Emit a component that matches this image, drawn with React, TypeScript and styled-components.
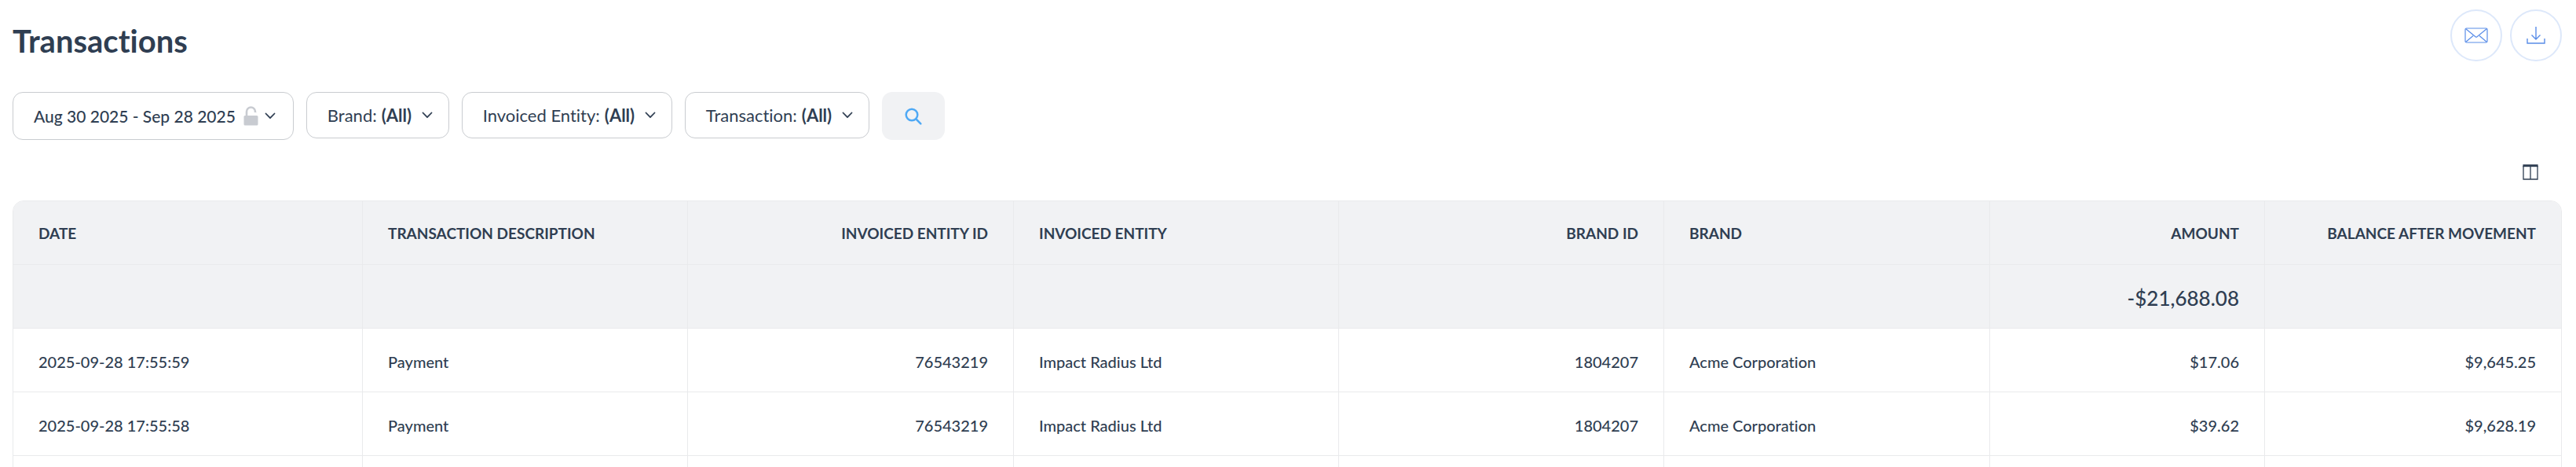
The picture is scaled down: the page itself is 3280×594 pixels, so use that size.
import React from "react";
import styled, { createGlobalStyle } from "styled-components";

const ink = "#2f3e52";
const line = "#e9eaec";
const panel = "#f1f2f4";

const GlobalStyle = createGlobalStyle`
  *, *::before, *::after { box-sizing: border-box; }
  body {
    margin: 0;
    background: #fff;
    color: ${ink};
    font-family: Lato, "Liberation Sans", sans-serif;
    font-size: 20px;
    font-weight: 500;
    font-variant-ligatures: none;
    line-height: 24px;
  }
  #root { overflow: hidden; height: 100vh; }
`;

const Page = styled.main`
  padding: 12px 18px 0 16px;
`;

const Header = styled.header`
  display: flex;
  justify-content: space-between;
  align-items: flex-start;
  height: 105px;
`;

const Title = styled.h1`
  margin: 16px 0 0;
  font-size: 40px;
  line-height: 48px;
  font-weight: 700;
`;

const Actions = styled.div`
  display: flex;
  gap: 10px;
`;

const RoundButton = styled.button`
  display: grid;
  place-items: center;
  width: 66px;
  height: 66px;
  padding: 0;
  border: 2px solid #dde8fa;
  border-radius: 50%;
  background: #fff;
  color: #5a8de8;
  cursor: pointer;
`;

const Filters = styled.div`
  display: flex;
  align-items: flex-start;
  gap: 16px;
`;

const DateButton = styled.button`
  display: flex;
  align-items: center;
  height: 61px;
  padding: 0 22px 0 26px;
  border: 1px solid #c9ccd0;
  border-radius: 13px;
  background: #fff;
  color: inherit;
  font: inherit;
  font-size: 21px;
  cursor: pointer;

  svg:first-of-type { margin: 0 8px 0 10px; }
`;

const FilterBox = styled.label`
  display: flex;
  align-items: center;
  gap: 6px;
  height: 59px;
  padding: 0 20px 0 26px;
  border: 1px solid #c9ccd0;
  border-radius: 13px;
  background: #fff;
  font-size: 22px;
  font-weight: 400;
`;

const SelectWrap = styled.span`
  display: grid;
  align-items: center;
  justify-items: end;

  > * { grid-area: 1 / 1; }
  > svg { pointer-events: none; }
`;

const Select = styled.select`
  appearance: none;
  margin: 0;
  padding: 0 26px 0 0;
  border: 0;
  background: transparent;
  color: inherit;
  font: inherit;
  font-weight: 700;
  cursor: pointer;
`;

const SearchButton = styled.button`
  display: grid;
  place-items: center;
  width: 80px;
  height: 61px;
  padding: 0;
  border: 0;
  border-radius: 13px;
  background: ${panel};
  color: #4fa9f5;
  cursor: pointer;
`;

const TableTools = styled.div`
  display: flex;
  justify-content: flex-end;
  align-items: center;
  height: 77px;
  padding: 4px 30px 0 0;
`;

const ColumnsButton = styled.button`
  display: flex;
  padding: 0;
  border: 0;
  background: none;
  color: ${ink};
  cursor: pointer;
`;

const Table = styled.table`
  width: 100%;
  table-layout: fixed;
  border-collapse: separate;
  border-spacing: 0;
  border: 1px solid ${line};
  border-radius: 14px 14px 0 0;
  overflow: hidden;
`;

const HeadCell = styled.th<{ $end?: boolean }>`
  height: 81px;
  padding: 2px 32px 0;
  border-right: 1px solid ${line};
  border-bottom: 1px solid ${line};
  background: ${panel};
  font-size: 19px;
  font-weight: 700;
  text-align: ${(p) => (p.$end ? "right" : "left")};
  text-transform: uppercase;
  white-space: nowrap;

  &:last-child { border-right: 0; }
`;

const TotalCell = styled.td`
  height: 81px;
  padding: 4px 32px 0;
  border-right: 1px solid ${line};
  border-bottom: 1px solid ${line};
  background: ${panel};
  font-size: 26px;
  line-height: 32px;
  text-align: right;

  &:last-child { border-right: 0; }
`;

const Cell = styled.td<{ $end?: boolean }>`
  height: 81px;
  padding: 4px 32px 0;
  border-right: 1px solid ${line};
  border-bottom: 1px solid ${line};
  text-align: ${(p) => (p.$end ? "right" : "left")};

  &:last-child { border-right: 0; }
`;

const Col = styled.col<{ $share: number }>`
  width: ${(p) => (p.$share / 3244) * 100}%;
`;

const Chevron = () => (
  <svg width="14" height="9" viewBox="0 0 14 9" fill="none" stroke="currentColor" strokeWidth="1.800" strokeLinecap="round" strokeLinejoin="round" aria-hidden="true">
    <path d="M1.500 1.500 7 7.200l5.500-5.700" />
  </svg>
);

const Unlock = () => (
  <svg width="19" height="25" viewBox="0 0 19 25" fill="none" aria-hidden="true">
    <rect x="0.500" y="12" width="18" height="12.500" rx="1.500" fill="#c8cbd1" />
    <path d="M4 12V7a5.500 5.500 0 0 1 11 0v2" stroke="#c8cbd1" strokeWidth="2.600" />
    <path d="M12.500 8h4v4h-4z" fill="#fff" />
  </svg>
);

const Search = () => (
  <svg width="22" height="22" viewBox="0 0 22 22" fill="none" stroke="currentColor" strokeWidth="2.500" strokeLinecap="round" aria-hidden="true">
    <circle cx="9" cy="9" r="7.300" />
    <path d="m14.500 14.500 5.800 5.800" />
  </svg>
);

const Mail = () => (
  <svg width="30" height="20" viewBox="0 0 30 20" fill="none" stroke="currentColor" strokeWidth="1.200" aria-hidden="true">
    <rect x="1" y="1" width="28" height="18" rx="1.500" />
    <path d="m1.500 1.500 12.500 10.300q1 .8 2 0L28.500 1.500M1.500 18.500l9.500-8M28.500 18.500l-9.500-8" />
  </svg>
);

const Download = () => (
  <svg width="24" height="22" viewBox="0 0 24 22" fill="none" stroke="currentColor" strokeWidth="1.400" aria-hidden="true">
    <path d="M12 0v16M6.500 10.500 12 16l5.500-5.500M1 15v6h22v-6" />
  </svg>
);

const Columns = () => (
  <svg width="20" height="20" viewBox="0 0 20 20" fill="none" stroke="currentColor" aria-hidden="true">
    <path d="M1 2v17h18V2M10 3v16" strokeWidth="1.300" />
    <path d="M.4 1.700h19.200" strokeWidth="3" />
  </svg>
);

const columns = [
  { name: "Date", share: 445 },
  { name: "Transaction Description", share: 414 },
  { name: "Invoiced Entity ID", share: 415, end: true },
  { name: "Invoiced Entity", share: 414 },
  { name: "Brand ID", share: 414, end: true },
  { name: "Brand", share: 415 },
  { name: "Amount", share: 350, end: true },
  { name: "Balance After Movement", share: 377, end: true },
];

const totals = ["", "", "", "", "", "", "-$21,688.08", ""];

const rows = [
  ["2025-09-28 17:55:59", "Payment", "76543219", "Impact Radius Ltd", "1804207", "Acme Corporation", "$17.06", "$9,645.25"],
  ["2025-09-28 17:55:58", "Payment", "76543219", "Impact Radius Ltd", "1804207", "Acme Corporation", "$39.62", "$9,628.19"],
  ["", "", "", "", "", "", "", ""],
];

const filters = ["Brand", "Invoiced Entity", "Transaction"];

export default function App() {
  return (
    <>
      <GlobalStyle />
      <Page>
        <Header>
          <Title>Transactions</Title>
          <Actions>
            <RoundButton aria-label="Email report"><Mail /></RoundButton>
            <RoundButton aria-label="Download report"><Download /></RoundButton>
          </Actions>
        </Header>
        <Filters>
          <DateButton aria-haspopup="dialog">
            Aug 30 2025 - Sep 28 2025
            <Unlock />
            <Chevron />
          </DateButton>
          {filters.map((name) => (
            <FilterBox key={name}>
              {name}:
              <SelectWrap>
                <Select><option>(All)</option></Select>
                <Chevron />
              </SelectWrap>
            </FilterBox>
          ))}
          <SearchButton aria-label="Search"><Search /></SearchButton>
        </Filters>
        <TableTools>
          <ColumnsButton aria-label="Choose columns"><Columns /></ColumnsButton>
        </TableTools>
        <Table>
          <colgroup>
            {columns.map((c) => <Col key={c.name} $share={c.share} />)}
          </colgroup>
          <thead>
            <tr>
              {columns.map((c) => <HeadCell key={c.name} scope="col" $end={c.end}>{c.name}</HeadCell>)}
            </tr>
            <tr>
              {totals.map((t, i) => <TotalCell key={i}>{t}</TotalCell>)}
            </tr>
          </thead>
          <tbody>
            {rows.map((row, r) => (
              <tr key={r}>
                {row.map((value, i) => <Cell key={i} $end={columns[i].end}>{value}</Cell>)}
              </tr>
            ))}
          </tbody>
        </Table>
      </Page>
    </>
  );
}
